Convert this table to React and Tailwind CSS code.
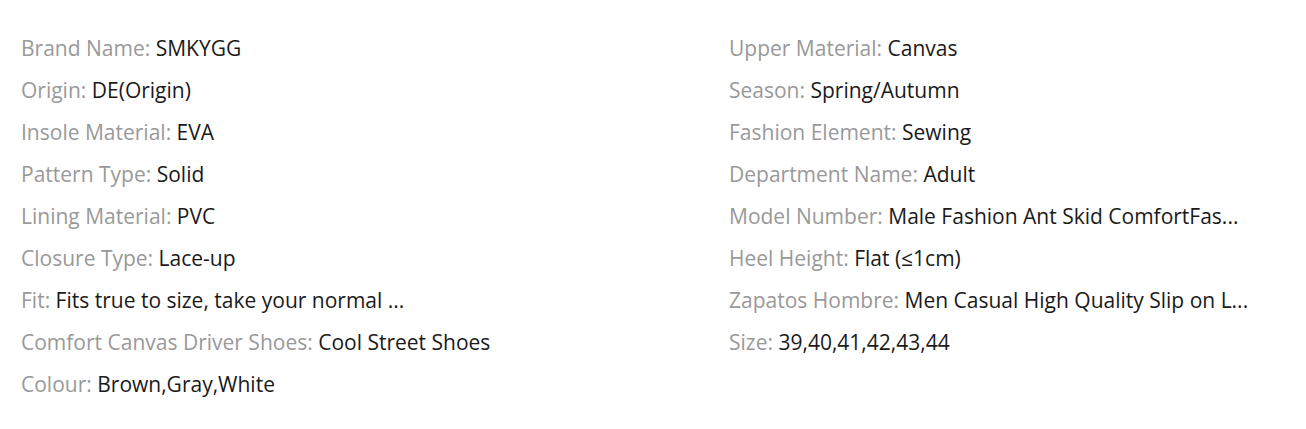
import React from 'react';

const left = [
  ['Brand Name', 'SMKYGG'],
  ['Origin', 'DE(Origin)'],
  ['Insole Material', 'EVA'],
  ['Pattern Type', 'Solid'],
  ['Lining Material', 'PVC'],
  ['Closure Type', 'Lace-up'],
  ['Fit', 'Fits true to size, take your normal ...'],
  ['Comfort Canvas Driver Shoes', 'Cool Street Shoes'],
  ['Colour', 'Brown,Gray,White'],
];

const right = [
  ['Upper Material', 'Canvas'],
  ['Season', 'Spring/Autumn'],
  ['Fashion Element', 'Sewing'],
  ['Department Name', 'Adult'],
  ['Model Number', 'Male Fashion Ant Skid ComfortFas...'],
  ['Heel Height', 'Flat (≤1cm)'],
  ['Zapatos Hombre', 'Men Casual High Quality Slip on L...'],
  ['Size', '39,40,41,42,43,44'],
];

const Spec = ({ name, value }) => (
  <li className="h-[42px] leading-[42px] whitespace-nowrap">
    <span className="text-[#999999]">{name}: </span>
    <span className="text-[#1a1a1a]">{value}</span>
  </li>
);

const App = () => {
  return (
    <div
      className="w-[1306px] h-[429px] bg-white pt-[27px] pl-[21px] grid grid-cols-[708px_1fr] text-[21px]"
      style={{ fontFamily: '"Open Sans", sans-serif' }}
    >
      <ul>
        {left.map(([n, v]) => (
          <Spec key={n} name={n} value={v} />
        ))}
      </ul>
      <ul>
        {right.map(([n, v]) => (
          <Spec key={n} name={n} value={v} />
        ))}
      </ul>
    </div>
  );
};

export default App;
